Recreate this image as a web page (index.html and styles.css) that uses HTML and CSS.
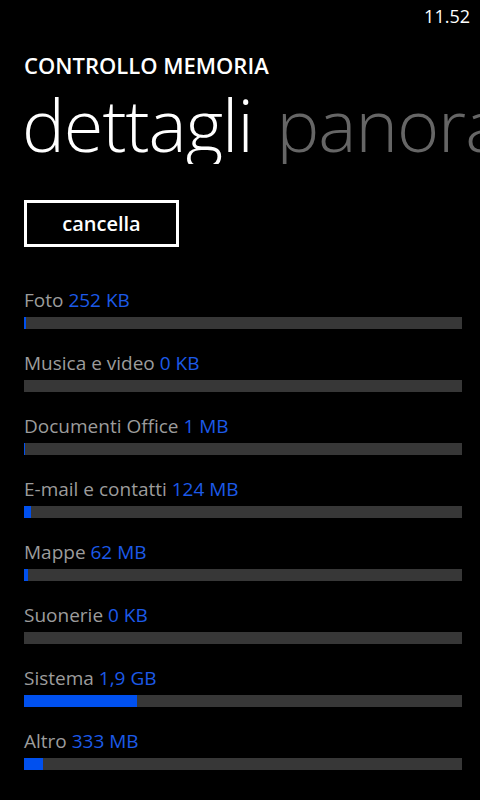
FILE: index.html
```html
<!DOCTYPE html>
<html lang="it">
<head>
<meta charset="utf-8">
<link rel="stylesheet" href="styles.css">
</head>
<body>
<div class="screen">
  <div class="status"><span class="time">11.52</span></div>
  <div class="app-title">CONTROLLO MEMORIA</div>
  <div class="pivot">
    <span class="pivot-item active">dettagli</span>
    <span class="pivot-item other">panoramica</span>
  </div>
  <button class="btn">cancella</button>
  <ul class="list">
    <li class="row"><div class="label">Foto <span class="val">252 KB</span></div><div class="bar"><div class="fill" style="width:2px"></div></div></li>
    <li class="row"><div class="label">Musica e video <span class="val">0 KB</span></div><div class="bar"><div class="fill" style="width:0"></div></div></li>
    <li class="row"><div class="label">Documenti Office <span class="val">1 MB</span></div><div class="bar"><div class="fill" style="width:1px"></div></div></li>
    <li class="row"><div class="label">E-mail e contatti <span class="val">124 MB</span></div><div class="bar"><div class="fill" style="width:7px"></div></div></li>
    <li class="row"><div class="label">Mappe <span class="val">62 MB</span></div><div class="bar"><div class="fill" style="width:4px"></div></div></li>
    <li class="row"><div class="label">Suonerie <span class="val">0 KB</span></div><div class="bar"><div class="fill" style="width:0"></div></div></li>
    <li class="row"><div class="label">Sistema <span class="val">1,9 GB</span></div><div class="bar"><div class="fill" style="width:113px"></div></div></li>
    <li class="row"><div class="label">Altro <span class="val">333 MB</span></div><div class="bar"><div class="fill" style="width:19px"></div></div></li>
  </ul>
</div>
</body>
</html>
```
FILE: styles.css
```css
html, body {
  margin: 0;
  padding: 0;
  background: #000;
}
body {
  font-family: "Open Sans", "Noto Sans", sans-serif;
  color: #fff;
  width: 480px;
  height: 800px;
  overflow: hidden;
}
.screen {
  display: flex;
  flex-direction: column;
}
.status {
  height: 32px;
  display: flex;
  justify-content: flex-end;
  align-items: center;
  padding-right: 10px;
}
.time {
  font-size: 18px;
  line-height: 32px;
}
.app-title {
  margin-top: 18px;
  padding-left: 24px;
  font-size: 22px;
  font-weight: 600;
  line-height: 30px;
}
.pivot {
  white-space: nowrap;
  overflow: hidden;
  padding-left: 22px;
  font-size: 72px;
  font-weight: 300;
  line-height: 80px;
  margin-top: 4px;
  letter-spacing: -1px;
}
.pivot-item.other {
  color: #666;
  margin-left: 6px;
}
.btn {
  margin: 36px 0 0 24px;
  width: 155px;
  height: 47px;
  box-sizing: border-box;
  border: 3px solid #fff;
  background: #000;
  color: #fff;
  font-family: "Open Sans", sans-serif;
  font-size: 20px;
  font-weight: 600;
  padding: 0;
}
.list {
  list-style: none;
  margin: 39px 0 0;
  padding: 0 18px 0 24px;
  display: flex;
  flex-direction: column;
  gap: 20px;
}
.label {
  font-size: 19px;
  line-height: 28px;
  color: #9c9c9c;
}
.val {
  color: #1c5ae8;
}
.bar {
  margin-top: 3px;
  height: 12px;
  background: #373737;
}
.fill {
  height: 100%;
  background: #0050ef;
}
```
